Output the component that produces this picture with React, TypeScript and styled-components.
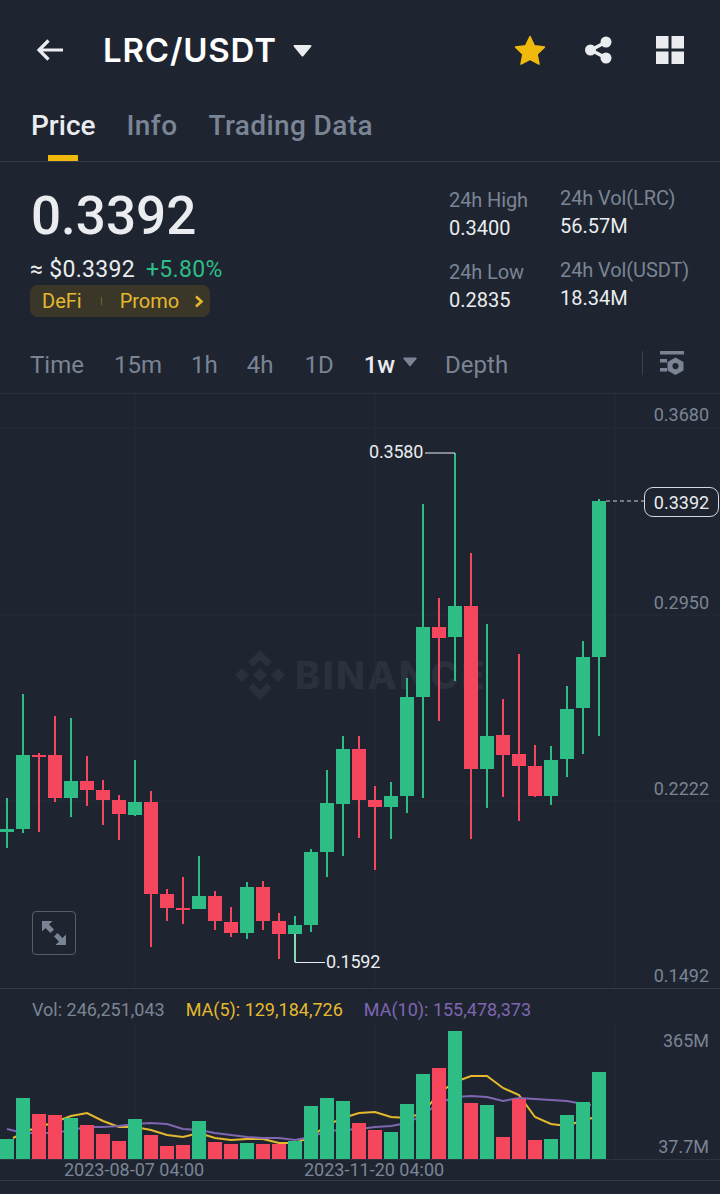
import React from 'react';
import styled, { createGlobalStyle } from 'styled-components';

const GlobalStyle = createGlobalStyle`
  html, body {
    margin: 0;
    padding: 0;
    background: #1e2530;
  }
  * {
    box-sizing: border-box;
  }
`;

const GREEN = '#2ebd85';
const RED = '#f6465d';

const Page = styled.div`
  width: 720px;
  height: 1194px;
  overflow: hidden;
  background: #1e2530;
  color: #eaecef;
  font-family: Roboto, 'Liberation Sans', sans-serif;
`;

const Header = styled.div`
  height: 100px;
  display: flex;
  align-items: center;
  padding-left: 36px;
`;

const Title = styled.div`
  margin-left: 39px;
  font-family: Inter, sans-serif;
  font-size: 33px;
  font-weight: 600;
  color: #fff;
  letter-spacing: 0.8px;
`;

const TitleCaret = styled.svg`
  margin-left: 16px;
`;

const HeaderActions = styled.div`
  margin-left: auto;
  display: flex;
  align-items: center;
  gap: 38px;
  padding-right: 36px;
`;

const GridIcon = styled.svg`
  margin-left: 5px;
`;

const Tabs = styled.div`
  height: 62px;
  display: flex;
  gap: 31px;
  padding-left: 31px;
  border-bottom: 1px solid #343b47;
`;

const Tab = styled.div<{ $active?: boolean }>`
  position: relative;
  height: 61px;
  line-height: 51px;
  font-size: 28px;
  font-weight: 500;
  letter-spacing: ${(p) => (p.$active ? 0 : 0.4)}px;
  color: ${(p) => (p.$active ? '#eaecef' : '#7b8494')};

  &::after {
    content: '';
    display: ${(p) => (p.$active ? 'block' : 'none')};
    position: absolute;
    left: 17px;
    bottom: 0;
    width: 30px;
    height: 6px;
    background: #f0b90b;
  }
`;

const Summary = styled.div`
  height: 170px;
  display: flex;
  padding: 23px 0 0 30px;
`;

const PriceColumn = styled.div`
  width: 419px;
`;

const LastPrice = styled.div`
  font-size: 53px;
  line-height: 62px;
  font-weight: 500;
  color: #eaecef;
  padding-left: 1px;
`;

const FiatRow = styled.div`
  display: flex;
  gap: 11px;
  margin-top: 8px;
  font-size: 23px;
  line-height: 30px;
  letter-spacing: 0.3px;
`;

const Change = styled.span`
  color: ${GREEN};
`;

const TagRow = styled.div`
  width: 180px;
  height: 32px;
  display: flex;
  align-items: center;
  padding-left: 12px;
  border-radius: 8px;
  background: #3a3628;
  color: #e5b92e;
  font-size: 20px;
`;

const TagDivider = styled.span`
  width: 1px;
  height: 8px;
  margin: 0 18px 0 19px;
  background: #6d6436;
`;

const TagChevron = styled.svg`
  margin-left: 15px;
`;

const StatColumn = styled.div<{ $width: number; $offset: number }>`
  width: ${(p) => p.$width}px;
  margin-top: ${(p) => p.$offset}px;
`;

const StatLabel = styled.div`
  height: 26px;
  line-height: 26px;
  font-size: 20px;
  letter-spacing: -0.1px;
  color: #7b8494;
  white-space: nowrap;
`;

const StatValue = styled.div`
  height: 46px;
  padding-top: 2px;
  line-height: 26px;
  font-size: 20px;
  color: #eaecef;
`;

const Intervals = styled.div`
  height: 62px;
  display: flex;
  align-items: center;
  padding: 4px 36px 0 30px;
  border-bottom: 1px solid #2a313c;
`;

const Interval = styled.div<{ $active?: boolean; $gap: number }>`
  margin-right: ${(p) => p.$gap}px;
  font-size: 24px;
  font-weight: ${(p) => (p.$active ? 500 : 400)};
  color: ${(p) => (p.$active ? '#eaecef' : '#7b8494')};
`;

const IntervalCaret = styled.svg`
  margin: 0 28px 6px 0;
`;

const IntervalTools = styled.div`
  margin: 0 0 4px auto;
  display: flex;
  align-items: center;
  gap: 17px;
`;

const ToolDivider = styled.span`
  width: 1px;
  height: 24px;
  background: #3a414d;
`;

const ChartArea = styled.div`
  position: relative;
  height: 595px;
  border-bottom: 1px solid #343b47;
`;

const ChartSvg = styled.svg`
  position: relative;
  display: block;
  z-index: 1;
`;

const Watermark = styled.div`
  position: absolute;
  left: 235px;
  top: 256px;
  display: flex;
  align-items: center;
  gap: 10px;
  font-family: Inter, sans-serif;
  font-size: 38px;
  font-weight: 800;
  letter-spacing: 2.4px;
  color: #2a313c;
`;

const AxisLabel = styled.div<{ $y: number }>`
  position: absolute;
  z-index: 2;
  right: 11px;
  top: ${(p) => p.$y}px;
  font-size: 18px;
  line-height: 22px;
  color: #7b8494;
`;

const ExtremeLabel = styled.div<{ $x: number; $y: number }>`
  position: absolute;
  z-index: 2;
  left: ${(p) => p.$x}px;
  top: ${(p) => p.$y}px;
  font-size: 18px;
  line-height: 22px;
  letter-spacing: -0.2px;
  color: #eaecef;
`;

const LastTag = styled.div`
  position: absolute;
  z-index: 2;
  left: 644px;
  top: 93px;
  width: 75px;
  height: 30px;
  border: 1px solid #d5d8de;
  border-radius: 9px;
  background: #1e2530;
  text-align: center;
  font-size: 18px;
  line-height: 29px;
  color: #eaecef;
`;

const ExpandButton = styled.div`
  position: absolute;
  z-index: 2;
  left: 32px;
  top: 517px;
  width: 44px;
  height: 44px;
  display: flex;
  align-items: center;
  justify-content: center;
  border: 1px solid #565e6b;
  border-radius: 4px;
`;

const Legend = styled.div`
  height: 36px;
  display: flex;
  align-items: center;
  gap: 21px;
  padding: 5px 0 0 32px;
  font-size: 18px;
`;

const LegendItem = styled.span<{ $color: string }>`
  color: ${(p) => p.$color};
`;

const VolumeArea = styled.div`
  position: relative;
  height: 135px;
`;

const DateRow = styled.div`
  position: relative;
  height: 21px;
  border-bottom: 1px solid #343b47;
`;

const DateLabel = styled.div<{ $x: number }>`
  position: absolute;
  left: ${(p) => p.$x}px;
  top: -1px;
  font-size: 18px;
  line-height: 22px;
  color: #7b8494;
`;

type Candle = [number, number, number, number, boolean, number];

// wick top, wick bottom, body top, body bottom, is green, volume bar top (page px)
const candles: Candle[] = [
  [798, 848, 829, 832, true, 1139],
  [694, 833, 755, 829, true, 1098],
  [753, 832, 755, 757, false, 1114],
  [716, 802, 755, 798, false, 1115],
  [718, 817, 781, 798, true, 1118],
  [756, 806, 781, 790, false, 1125],
  [780, 825, 790, 800, false, 1134],
  [795, 840, 800, 814, false, 1141],
  [760, 816, 802, 815, true, 1119],
  [791, 947, 802, 894, false, 1135],
  [889, 921, 894, 908, false, 1146],
  [877, 924, 908, 910, false, 1145],
  [856, 909, 896, 909, true, 1121],
  [891, 930, 896, 921, false, 1142],
  [907, 937, 922, 933, false, 1144],
  [882, 939, 887, 933, true, 1143],
  [881, 930, 887, 921, false, 1144],
  [913, 959, 921, 934, false, 1144],
  [916, 962, 925, 934, true, 1141],
  [849, 932, 852, 925, true, 1106],
  [770, 877, 803, 852, true, 1098],
  [736, 856, 749, 804, true, 1101],
  [736, 838, 749, 800, false, 1123],
  [786, 870, 800, 807, false, 1130],
  [782, 839, 796, 807, true, 1132],
  [678, 813, 697, 796, true, 1104],
  [504, 798, 627, 697, true, 1074],
  [598, 721, 627, 638, false, 1068],
  [453, 681, 606, 637, true, 1031],
  [553, 839, 606, 769, false, 1103],
  [624, 808, 736, 769, true, 1105],
  [699, 797, 735, 755, false, 1137],
  [654, 821, 754, 766, false, 1099],
  [745, 797, 766, 796, false, 1140],
  [746, 805, 760, 796, true, 1139],
  [686, 777, 709, 759, true, 1115],
  [641, 754, 657, 708, true, 1102],
  [499, 736, 501, 657, true, 1072],
];

const candleX = (i: number) => 7 + i * 16;

const ma5 =
  '13,1138 30,1130 55,1122 71,1116 87,1113 103,1121 119,1127 135,1127 151,1130 167,1135 183,1137 199,1133 215,1138 231,1140 247,1139 263,1139 279,1143 295,1143 311,1137 327,1125 343,1118 359,1113 375,1112 391,1117 407,1118 423,1113 439,1093 455,1082 471,1076 487,1076 503,1088 519,1095 535,1117 551,1124 567,1126 575,1123 599,1116';
const ma10 =
  '7,1129 23,1133 39,1133 55,1133 71,1130 87,1127 103,1127 119,1126 135,1124 151,1123 167,1124 183,1129 199,1130 215,1133 231,1135 247,1137 263,1138 279,1138 295,1140 311,1137 327,1131 343,1130 359,1129 375,1127 391,1126 407,1123 423,1115 439,1103 455,1097 471,1096 487,1097 503,1101 519,1098 535,1099 551,1100 567,1101 583,1104 591,1105';

const gridRows = [428, 615, 801];
const gridCols = [135, 375, 615];
const GRID = '#242b36';

const App = () => (
  <Page>
    <GlobalStyle />
    <Header>
      <svg width="28" height="24" viewBox="0 0 28 24">
        <path d="M27 12H3M12.500 2.500L3 12l9.500 9.500" fill="none" stroke="#eaecef" strokeWidth="3.2" />
      </svg>
      <Title>LRC/USDT</Title>
      <TitleCaret width="19" height="13" viewBox="0 0 19 13">
        <path d="M1.500 1h16a1 1 0 0 1 .8 1.600L10.500 12a1.300 1.300 0 0 1-2 0L.7 2.600A1 1 0 0 1 1.500 1z" fill="#eaecef" />
      </TitleCaret>
      <HeaderActions>
        <svg width="32" height="31" viewBox="0 0 32 31">
          <path
            d="M16 1.500l4.400 9.300 10 1.300-7.300 7 1.900 10.100-9-4.900-9 4.900 1.900-10.100-7.300-7 10-1.300z"
            fill="#f0b90b"
            stroke="#f0b90b"
            strokeLinejoin="round"
            strokeWidth="1.500"
          />
        </svg>
        <svg width="29" height="28" viewBox="0 0 29 28">
          <path d="M22 6L7 14l15 8" fill="none" stroke="#eaecef" strokeWidth="3.500" />
          <circle cx="22" cy="6" r="5.500" fill="#eaecef" />
          <circle cx="22" cy="22" r="5.500" fill="#eaecef" />
          <circle cx="6.500" cy="14" r="5.500" fill="#eaecef" />
        </svg>
        <GridIcon width="28" height="28" viewBox="0 0 28 28" fill="#eaecef">
          <rect x="0" y="0" width="12.500" height="12.500" />
          <rect x="15.500" y="0" width="12.500" height="12.500" />
          <rect x="0" y="15.500" width="12.500" height="12.500" />
          <rect x="15.500" y="15.500" width="12.500" height="12.500" />
        </GridIcon>
      </HeaderActions>
    </Header>

    <Tabs>
      <Tab $active>Price</Tab>
      <Tab>Info</Tab>
      <Tab>Trading Data</Tab>
    </Tabs>

    <Summary>
      <PriceColumn>
        <LastPrice>0.3392</LastPrice>
        <FiatRow>
          <span>≈ $0.3392</span>
          <Change>+5.80%</Change>
        </FiatRow>
        <TagRow>
          DeFi
          <TagDivider />
          Promo
          <TagChevron width="10" height="13" viewBox="0 0 10 13">
            <path d="M2 1.500L7.500 6.500 2 11.500" fill="none" stroke="#e5b92e" strokeWidth="2.600" />
          </TagChevron>
        </TagRow>
      </PriceColumn>
      <StatColumn $width={111} $offset={2}>
        <StatLabel>24h High</StatLabel>
        <StatValue>0.3400</StatValue>
        <StatLabel>24h Low</StatLabel>
        <StatValue>0.2835</StatValue>
      </StatColumn>
      <StatColumn $width={140} $offset={0}>
        <StatLabel>24h Vol(LRC)</StatLabel>
        <StatValue>56.57M</StatValue>
        <StatLabel>24h Vol(USDT)</StatLabel>
        <StatValue>18.34M</StatValue>
      </StatColumn>
    </Summary>

    <Intervals>
      <Interval $gap={30}>Time</Interval>
      <Interval $gap={29}>15m</Interval>
      <Interval $gap={29}>1h</Interval>
      <Interval $gap={31}>4h</Interval>
      <Interval $gap={30}>1D</Interval>
      <Interval $active $gap={8}>
        1w
      </Interval>
      <IntervalCaret width="14" height="10" viewBox="0 0 14 10">
        <path d="M1 .5h12a.8.8 0 0 1 .6 1.300L7.600 9a.8.8 0 0 1-1.200 0L.4 1.800A.8.8 0 0 1 1 .5z" fill="#7b8494" />
      </IntervalCaret>
      <Interval $gap={0}>Depth</Interval>
      <IntervalTools>
        <ToolDivider />
        <svg width="24" height="24" viewBox="0 0 24 24" fill="#7b8494">
          <rect x="0" y="0" width="24" height="3.500" />
          <rect x="0" y="8" width="7" height="3.500" />
          <rect x="0" y="17" width="7" height="3.500" />
          <path
            fillRule="evenodd"
            d="M15.500 6.500l8 4.500v8.500l-8 4.500-8-4.500V11zM15.500 12a3 3 0 1 0 0 6.200 3 3 0 0 0 0-6.200z"
          />
        </svg>
      </IntervalTools>
    </Intervals>

    <ChartArea>
      <Watermark>
        <svg width="50" height="50" viewBox="0 0 50 50" fill="#2a313c">
          <path d="M25 0l12 12-5 5-7-7-7 7-5-5zM25 50l12-12-5-5-7 7-7-7-5 5z" />
          <path d="M7 18l7 7-7 7-7-7zM43 18l7 7-7 7-7-7zM25 18l7 7-7 7-7-7z" />
        </svg>
        BINANCE
      </Watermark>
      <ChartSvg width="720" height="594" viewBox="0 394 720 594">
        {gridRows.map((y) => (
          <line key={y} x1="0" x2="720" y1={y} y2={y} stroke={GRID} />
        ))}
        {gridCols.map((x) => (
          <line key={x} x1={x} x2={x} y1="394" y2="988" stroke={GRID} />
        ))}
        {candles.map(([wickTop, wickBottom, bodyTop, bodyBottom, up], i) => (
          <g key={i} fill={up ? GREEN : RED}>
            <rect x={candleX(i) - 1} y={wickTop} width="2" height={wickBottom - wickTop} />
            <rect x={candleX(i) - 7} y={bodyTop} width="14" height={bodyBottom - bodyTop} />
          </g>
        ))}
        <path d="M425 453H455" stroke="#eaecef" strokeWidth="1" fill="none" />
        <path d="M295 934V962.500H325" stroke="#eaecef" strokeWidth="1" fill="none" />
        <path d="M606 501H644" stroke="#c8ccd3" strokeWidth="1" strokeDasharray="4 3" fill="none" />
      </ChartSvg>
      <AxisLabel $y={10}>0.3680</AxisLabel>
      <AxisLabel $y={198}>0.2950</AxisLabel>
      <AxisLabel $y={384}>0.2222</AxisLabel>
      <AxisLabel $y={571}>0.1492</AxisLabel>
      <ExtremeLabel $x={369} $y={47}>
        0.3580
      </ExtremeLabel>
      <ExtremeLabel $x={326} $y={557}>
        0.1592
      </ExtremeLabel>
      <LastTag>0.3392</LastTag>
      <ExpandButton>
        <svg width="26" height="26" viewBox="0 0 26 26" fill="#7b8494">
          <path d="M1 1h10.500L8 4.500l5 5L9.500 13l-5-5L1 11.500z" />
          <path d="M25 25H14.500l3.500-3.500-5-5 3.500-3.500 5 5 3.500-3.500z" />
        </svg>
      </ExpandButton>
    </ChartArea>

    <Legend>
      <LegendItem $color="#7b8494">Vol: 246,251,043</LegendItem>
      <LegendItem $color="#e5b92e">MA(5): 129,184,726</LegendItem>
      <LegendItem $color="#7f66b0">MA(10): 155,478,373</LegendItem>
    </Legend>

    <VolumeArea>
      <ChartSvg width="720" height="135" viewBox="0 1025 720 135">
        <line x1="135" x2="135" y1="1025" y2="1160" stroke={GRID} />
        <line x1="375" x2="375" y1="1025" y2="1160" stroke={GRID} />
        <line x1="615" x2="615" y1="1025" y2="1160" stroke={GRID} />
        <line x1="0" x2="720" y1="1159.500" y2="1159.500" stroke="#2d343f" />
        <polyline points={ma5} fill="none" stroke="#e5b92e" strokeWidth="2" />
        <polyline points={ma10} fill="none" stroke="#7f66b0" strokeWidth="2" />
        {candles.map(([, , , , up, volumeTop], i) => (
          <rect
            key={i}
            x={candleX(i) - 7}
            y={volumeTop}
            width="14"
            height={1159 - volumeTop}
            fill={up ? GREEN : RED}
          />
        ))}
      </ChartSvg>
      <AxisLabel $y={5}>365M</AxisLabel>
      <AxisLabel $y={111}>37.7M</AxisLabel>
    </VolumeArea>

    <DateRow>
      <DateLabel $x={64}>2023-08-07 04:00</DateLabel>
      <DateLabel $x={304}>2023-11-20 04:00</DateLabel>
    </DateRow>
  </Page>
);

export default App;
